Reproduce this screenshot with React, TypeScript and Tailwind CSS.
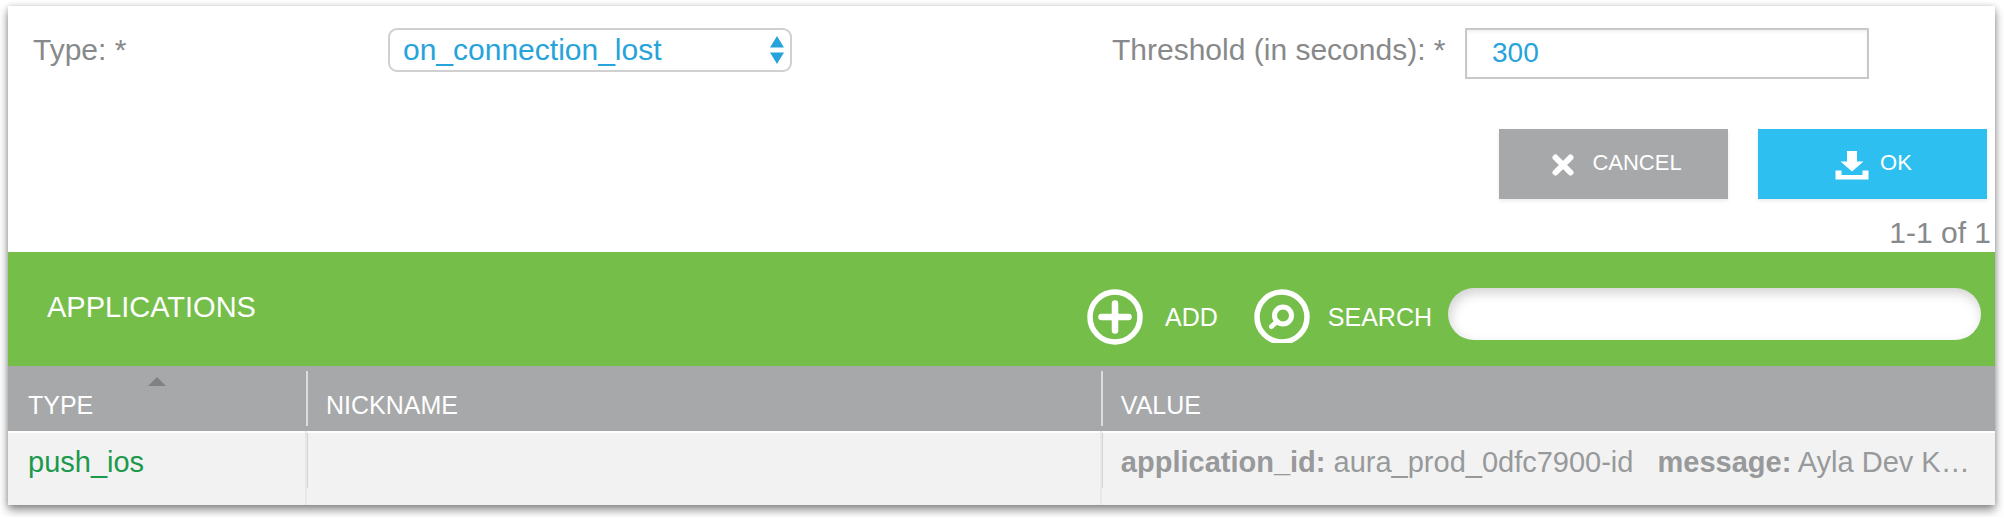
import { useState } from "react";

function CloseIcon() {
  return (
    <svg viewBox="0 0 24 24" className="size-6 shrink-0" aria-hidden="true">
      <path d="M4.5 4.5 19.5 19.5M19.5 4.5 4.5 19.5" stroke="white" strokeWidth="6" strokeLinecap="round" fill="none" />
    </svg>
  );
}

function DownloadIcon() {
  return (
    <svg viewBox="0 0 34 30" className="h-[30px] w-[34px] shrink-0" aria-hidden="true">
      <path d="M12 1h10v10.500h6.500L17 21.500 5.500 11.500H12z" fill="white" />
      <path d="M.5 20.500h6v4.500h21v-4.500h6V29.500H.5z" fill="white" />
    </svg>
  );
}

function AddIcon() {
  return (
    <svg viewBox="0 0 56 56" className="size-14 shrink-0" aria-hidden="true">
      <circle cx="28" cy="28" r="25" fill="none" stroke="white" strokeWidth="5.500" />
      <path d="M28 14.500v27M14.500 28h27" stroke="white" strokeWidth="6.500" strokeLinecap="round" />
    </svg>
  );
}

function SearchIcon() {
  return (
    <svg viewBox="0 0 56 56" className="size-14 shrink-0" aria-hidden="true">
      <clipPath id="search-ring">
        <rect width="56" height="54" />
      </clipPath>
      <g clipPath="url(#search-ring)" fill="none" stroke="white">
        <circle cx="28" cy="28" r="25" strokeWidth="5.500" />
        <circle cx="29" cy="26.500" r="8.500" strokeWidth="5" />
        <path d="M23 32.500 17.500 37.500" strokeWidth="5" strokeLinecap="round" />
      </g>
    </svg>
  );
}

const applications = [
  { type: "push_ios", nickname: "", id: "aura_prod_0dfc7900-id", message: "Ayla Dev K…" },
];

const headCell =
  "h-[66px] bg-[linear-gradient(#dcddde,#dcddde)] bg-[length:2px_55px] bg-[position:0_5px] bg-no-repeat pt-3 pl-5 text-left align-middle font-normal";
const bodyCell =
  "border-l-2 border-[#e8e8e8] bg-[linear-gradient(#d4d4d4,#d4d4d4)] bg-[length:2px_55px] bg-[position:0_1px] bg-origin-border bg-no-repeat pt-[11px] pl-[19px] align-top";

export default function App() {
  const [type, setType] = useState("on_connection_lost");
  const [threshold, setThreshold] = useState("300");
  const [query, setQuery] = useState("");

  return (
    <main className="bg-white pt-1.5 pr-[9px] pb-3 pl-2 font-['Liberation_Sans',Arial,sans-serif] text-[30px] leading-9 text-[#87898b]">
      <div className="bg-white shadow-[0_5px_9px_rgba(0,0,0,0.45),0_0_5px_rgba(0,0,0,0.15)]">
        <form onSubmit={(e) => e.preventDefault()}>
          <div className="grid grid-cols-[355fr_404fr_320fr_353fr_404fr_126fr] items-start pt-[22px] pl-[25px]">
            <label htmlFor="type" className="pt-1">
              Type: *
            </label>
            <div className="relative">
              <select
                id="type"
                value={type}
                onChange={(e) => setType(e.target.value)}
                className="block h-11 w-full appearance-none rounded-[9px] border-2 border-[#d0d0d0] bg-white pl-[13px] text-[#27a3dc] outline-none"
              >
                <option>on_connection_lost</option>
                <option>on_connect</option>
              </select>
              <svg viewBox="0 0 14 28" className="pointer-events-none absolute top-2 right-2 h-7 w-3.5" aria-hidden="true">
                <path d="M7 0 14 11.500H0zM7 28 0 16.500h14z" fill="#27a3dc" />
              </svg>
            </div>
            <label htmlFor="threshold" className="col-start-4 whitespace-nowrap pt-1">
              Threshold (in seconds): *
            </label>
            <input
              id="threshold"
              value={threshold}
              onChange={(e) => setThreshold(e.target.value)}
              className="block h-[51px] w-full border-2 border-[#c8c8c8] bg-white pb-0.5 pl-[25px] text-[28px] text-[#27a3dc] shadow-[inset_0_2px_3px_rgba(0,0,0,0.06)] outline-none"
            />
          </div>
          <div className="flex justify-end gap-[30px] pt-[50px] pr-2 text-[22px] text-white">
            <button
              type="button"
              className="flex h-[70px] w-[229px] items-center justify-center gap-[17px] bg-[#a7a8aa] pt-0.5 pl-1.5 shadow-[0_2px_4px_rgba(0,0,0,0.08)]"
            >
              <CloseIcon />
              <span className="pb-1">CANCEL</span>
            </button>
            <button
              type="submit"
              className="flex h-[70px] w-[229px] items-center justify-center gap-[11px] bg-[#2cbfef] pt-0.5 pl-0.5 shadow-[0_2px_4px_rgba(0,0,0,0.08)]"
            >
              <DownloadIcon />
              <span className="pb-1">OK</span>
            </button>
          </div>
        </form>
        <p className="pt-4 pr-1 pb-px text-right">1-1 of 1</p>

        <section>
          <header className="flex h-[114px] items-center bg-[#75be4a] pr-3.5 pl-[39px] text-[25px] text-white">
            <h2 className="mr-auto pb-1 text-[29px]">APPLICATIONS</h2>
            <button type="button" className="flex items-center gap-[22px] pt-4">
              <AddIcon />
              ADD
            </button>
            <label htmlFor="search" className="flex items-center gap-[18px] pt-4 pl-9">
              <SearchIcon />
              SEARCH
            </label>
            <input
              id="search"
              type="search"
              value={query}
              onChange={(e) => setQuery(e.target.value)}
              className="mt-2.5 ml-4 h-[52px] w-[533px] rounded-full bg-white px-6 text-[#87898b] shadow-[inset_2px_5px_12px_rgba(0,0,0,0.18)] outline-none"
            />
          </header>
          <table className="w-full table-fixed border-collapse">
            <colgroup>
              <col className="w-[15%]" />
              <col className="w-[40%]" />
              <col />
            </colgroup>
            <thead className="bg-[#a7a8aa] text-[25px] text-white">
              <tr>
                <th scope="col" aria-sort="ascending" className="relative h-[66px] pt-3 pl-5 text-left font-normal">
                  TYPE
                  <svg viewBox="0 0 18 9" className="absolute top-[11px] left-1/2 h-[9px] w-[18px] -translate-x-1/2" aria-hidden="true">
                    <path d="M9 0 18 9H0z" fill="#808183" />
                  </svg>
                </th>
                <th scope="col" className={headCell}>NICKNAME</th>
                <th scope="col" className={headCell}>VALUE</th>
              </tr>
            </thead>
            <tbody className="bg-[#f2f2f2] text-[29px] text-[#97999b]">
              {applications.map((app) => (
                <tr key={app.id} className="h-[73px] border-t-2 border-white">
                  <td className="pt-[11px] pl-5 align-top">
                    <a href="#push_ios" className="text-[#1b994c]">{app.type}</a>
                  </td>
                  <td className={bodyCell}>{app.nickname}</td>
                  <td className={bodyCell}>
                    <div className="truncate">
                      <b>application_id:</b> {app.id} <b className="ml-4">message:</b> {app.message}
                    </div>
                  </td>
                </tr>
              ))}
            </tbody>
          </table>
        </section>
      </div>
    </main>
  );
}
